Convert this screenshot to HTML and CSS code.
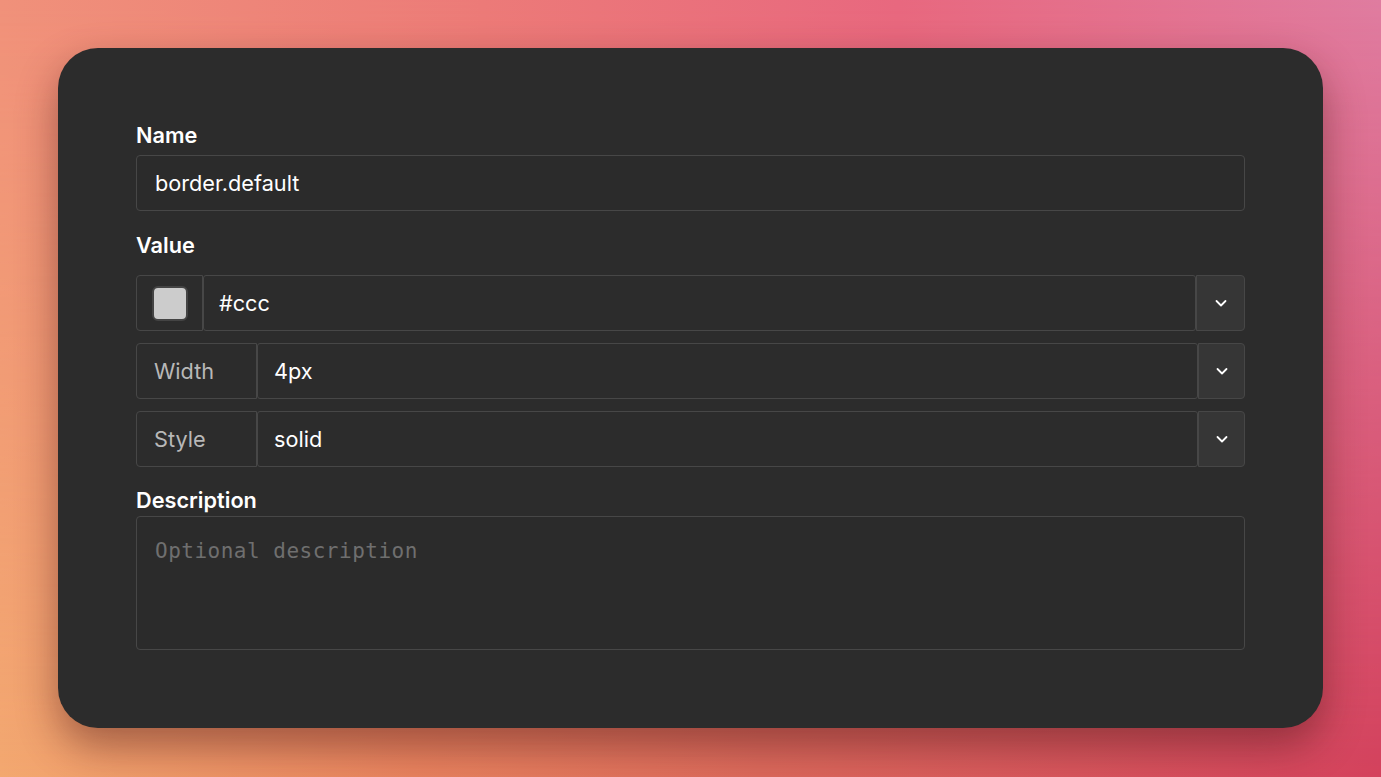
FILE: index.html
```html
<!DOCTYPE html>
<html lang="en">
<head>
<meta charset="utf-8">
<title>Token editor</title>
<link rel="stylesheet" href="styles.css">
</head>
<body>
<div class="stage">
  <form class="card">
    <label class="label label-name">Name</label>
    <div class="field">
      <input class="text-input" type="text" value="border.default">
    </div>

    <label class="label label-value">Value</label>
    <div class="rows">
      <div class="group">
        <div class="cell swatch-cell"><span class="swatch"></span></div>
        <div class="cell main">#ccc</div>
        <div class="cell chevron">
          <svg width="14" height="14" viewBox="0 0 14 14"><path d="M2.5 5 L7 9.5 L11.5 5" fill="none" stroke="#fff" stroke-width="1.8" stroke-linecap="round" stroke-linejoin="round"/></svg>
        </div>
      </div>
      <div class="group">
        <div class="cell addon">Width</div>
        <div class="cell main">4px</div>
        <div class="cell chevron narrow">
          <svg width="14" height="14" viewBox="0 0 14 14"><path d="M2.5 5 L7 9.5 L11.5 5" fill="none" stroke="#fff" stroke-width="1.8" stroke-linecap="round" stroke-linejoin="round"/></svg>
        </div>
      </div>
      <div class="group">
        <div class="cell addon">Style</div>
        <div class="cell main">solid</div>
        <div class="cell chevron narrow">
          <svg width="14" height="14" viewBox="0 0 14 14"><path d="M2.5 5 L7 9.5 L11.5 5" fill="none" stroke="#fff" stroke-width="1.8" stroke-linecap="round" stroke-linejoin="round"/></svg>
        </div>
      </div>
    </div>

    <label class="label label-desc">Description</label>
    <textarea class="textarea" placeholder="Optional description"></textarea>
  </form>
</div>
</body>
</html>
```

FILE: styles.css
```css
* { box-sizing: border-box; }

html, body {
  margin: 0;
  height: 100%;
}

body {
  font-family: Inter, "Noto Sans", sans-serif;
  background: linear-gradient(to right, #f3a870 0%, #e9845f 30%, #dc6a5c 55%, #d4425d 100%);
  position: relative;
  overflow: hidden;
}

body::before {
  content: "";
  position: absolute;
  inset: 0;
  background: linear-gradient(to right, #f0917a 0%, #ec7a78 35%, #e8687f 65%, #df7ca0 100%);
  -webkit-mask-image: linear-gradient(to bottom, #000 0%, rgba(0,0,0,0.6) 40%, transparent 100%);
  mask-image: linear-gradient(to bottom, #000 0%, rgba(0,0,0,0.6) 40%, transparent 100%);
}

.stage {
  position: relative;
  padding: 48px 58px 49px;
  height: 100%;
}

.card {
  background: #2c2c2c;
  border-radius: 40px;
  height: 680px;
  padding: 75px 78px 78px;
  display: flex;
  flex-direction: column;
  box-shadow: 0 18px 40px rgba(70, 20, 20, 0.45);
}

.label {
  display: block;
  color: #ffffff;
  font-weight: 600;
  font-size: 21.7px;
  line-height: 24px;
}

.label-name { margin-bottom: 8px; }
.label-value { margin-top: 22px; margin-bottom: 18px; }
.label-desc { margin-top: 21px; margin-bottom: 4px; }

.field { display: flex; }

.text-input {
  width: 100%;
  height: 56px;
  background: #2b2b2b;
  border: 1px solid #474747;
  border-radius: 4px;
  color: #fff;
  font-family: Inter, "Noto Sans", sans-serif;
  font-size: 21.7px;
  padding: 0 18px;
  outline: none;
}

.rows {
  display: flex;
  flex-direction: column;
  gap: 12px;
}

.group {
  display: flex;
  height: 56px;
}

.cell {
  border: 1px solid #474747;
  border-radius: 4px;
  display: flex;
  align-items: center;
  font-size: 21.7px;
  color: #fff;
}

.swatch-cell {
  width: 67px;
  justify-content: center;
  border-top-right-radius: 0;
  border-bottom-right-radius: 0;
}

.swatch {
  width: 36px;
  height: 35px;
  background: #cccccc;
  border-radius: 6px;
  border: 2px solid #444;
}

.addon {
  width: 121px;
  padding-left: 17px;
  color: #b8b8b8;
  border-top-right-radius: 0;
  border-bottom-right-radius: 0;
}

.main {
  flex: 1;
  padding-left: 16px;
  border-radius: 3px;
}

.swatch-cell + .main { padding-left: 15px; }

.chevron {
  width: 49px;
  justify-content: center;
  background: #363636;
  border-top-left-radius: 0;
  border-bottom-left-radius: 0;
}

.chevron.narrow { width: 47px; }

.textarea {
  height: 134px;
  background: #2b2b2b;
  border: 1px solid #474747;
  border-radius: 4px;
  resize: none;
  padding: 20px 18px;
  font-family: "DejaVu Sans Mono", monospace;
  font-size: 21px;
  letter-spacing: 0.5px;
  line-height: 28px;
  color: #fff;
  outline: none;
}

.textarea::placeholder {
  color: #6f6f6f;
}
```
